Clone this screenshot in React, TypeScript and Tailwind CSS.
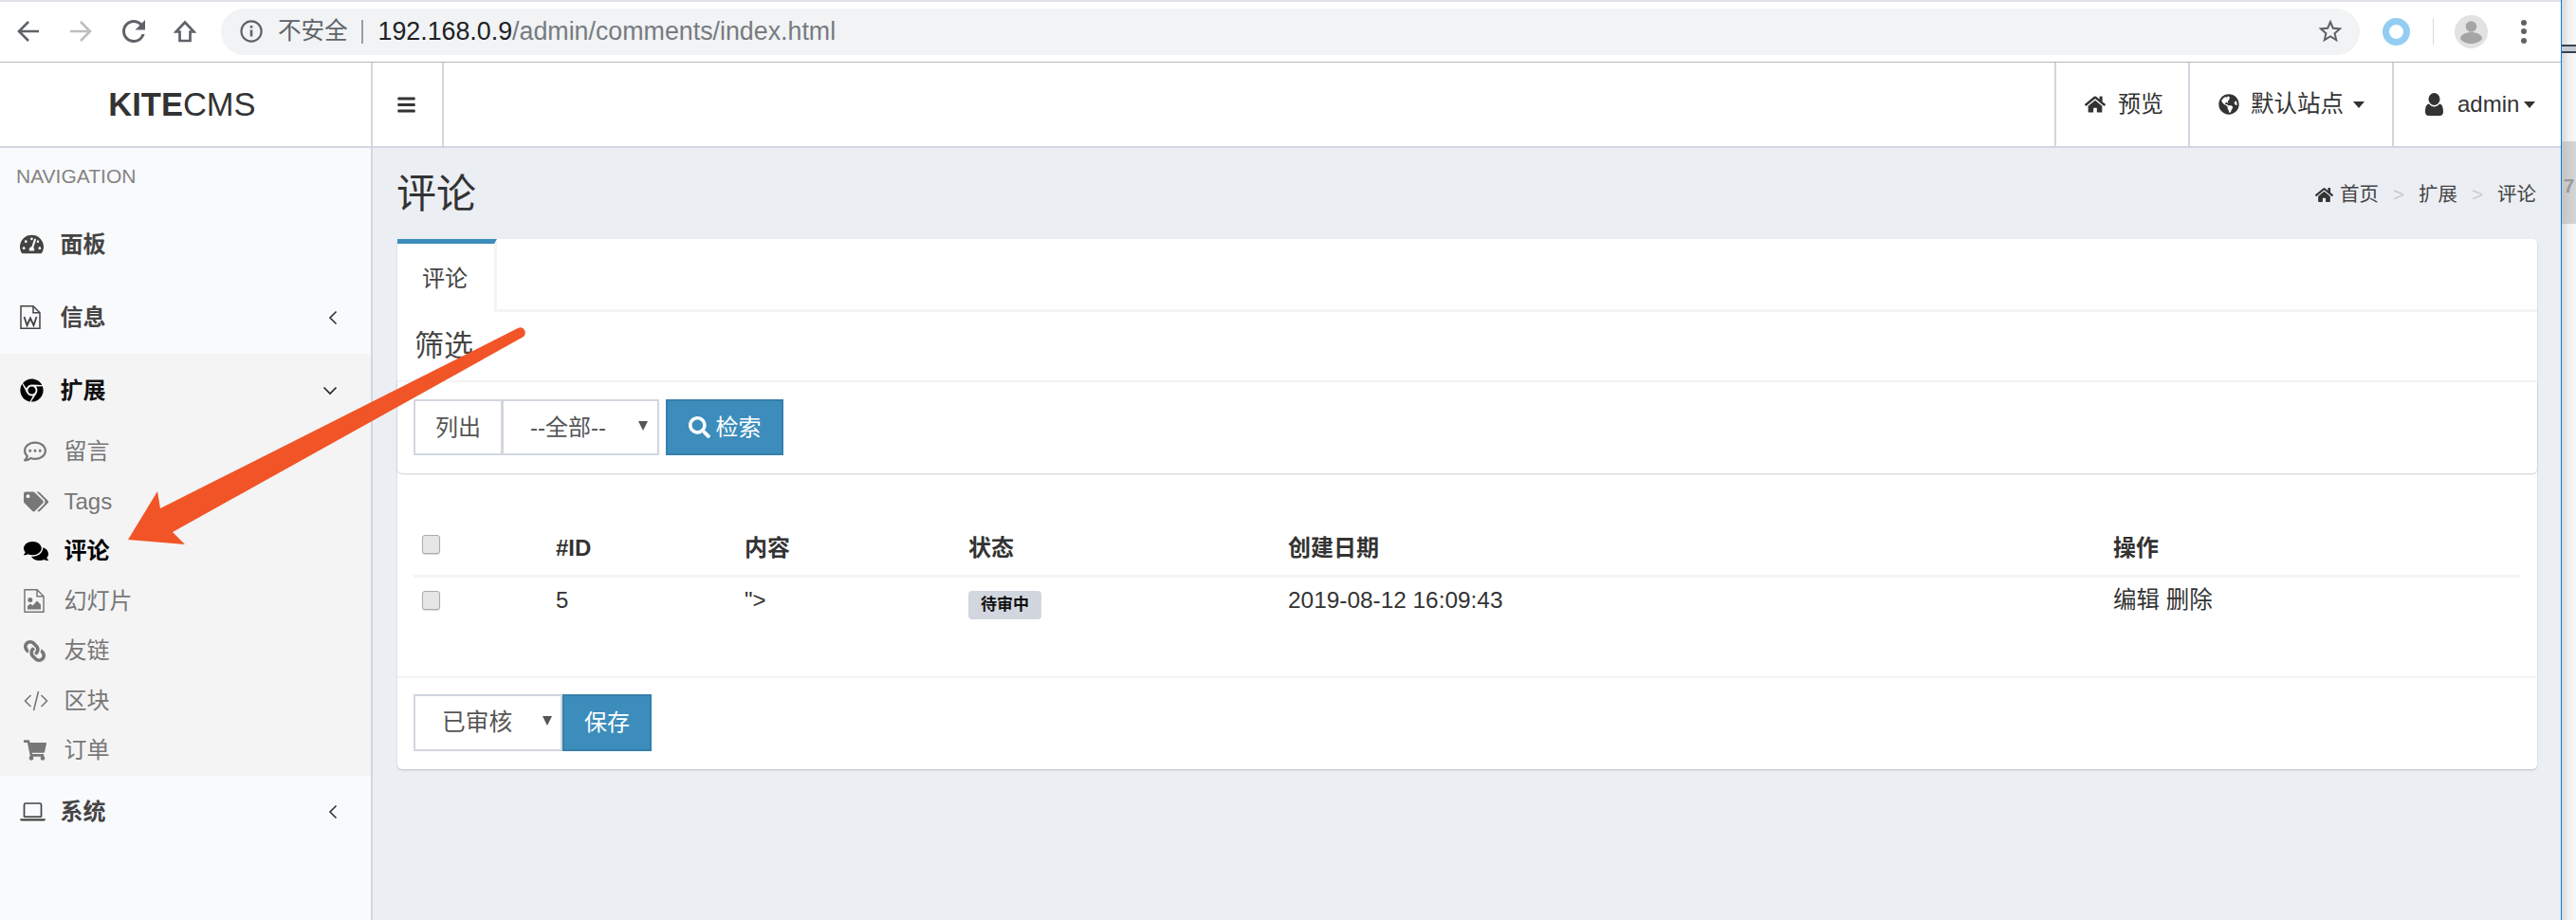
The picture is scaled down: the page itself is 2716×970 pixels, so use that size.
import React from "react";
import {
  FaTachometerAlt, FaChrome, FaRegCommentDots, FaTags, FaComments,
  FaLink, FaShoppingCart, FaHome, FaGlobeAmericas, FaBars, FaSearch,
} from "react-icons/fa";

const Caret = () => (
  <span className="inline-block w-0 h-0 border-l-[6.5px] border-r-[6.5px] border-t-[7px] border-l-transparent border-r-transparent border-t-[#333]" />
);

const ChevLeft = () => (
  <svg width="10" height="16" viewBox="0 0 10 16" fill="none" stroke="#333" strokeWidth="1.6"><path d="M8.5 1.5 2 8l6.5 6.5" /></svg>
);
const ChevDown = () => (
  <svg width="16" height="10" viewBox="0 0 16 10" fill="none" stroke="#222" strokeWidth="1.6"><path d="M1.5 1.5 8 8l6.5-6.5" /></svg>
);

const SelTri = () => (
  <span className="inline-block w-0 h-0 border-l-[5px] border-r-[5px] border-t-[10px] border-l-transparent border-r-transparent border-t-[#555]" />
);

const FileWord = () => (
  <svg width="22" height="25" viewBox="0 0 22 25" fill="none" stroke="#444" strokeWidth="1.5">
    <path d="M1 .8H14L21 7.800V24.200H1Z" />
    <path d="M14 .8V7.800H21" />
    <path d="M4.500 12 7.500 21 11 13.500 14.500 21 17.500 12" strokeWidth="1.8" />
  </svg>
);
const FileImage = () => (
  <svg width="22" height="25" viewBox="0 0 22 25" fill="none" stroke="#777" strokeWidth="1.5">
    <path d="M1 .8H14L21 7.800V24.200H1Z" />
    <path d="M14 .8V7.800H21" />
    <circle cx="6.800" cy="11.500" r="2.500" fill="#777" stroke="none" />
    <path d="M4 21.500V18L7 15.500 9.500 17.500 14 12.500 18 16.500V21.500Z" fill="#777" stroke="none" />
  </svg>
);
const CodeIcon = () => (
  <svg width="26" height="22" viewBox="0 0 26 22" fill="none" stroke="#777" strokeWidth="1.6">
    <path d="M7.500 5 1.500 11l6 6M18.500 5l6 6-6 6M15.500 1 10.500 21" />
  </svg>
);
const Laptop = () => (
  <svg width="27" height="20" viewBox="0 0 27 20" fill="none" stroke="#444" strokeWidth="1.7">
    <path d="M4.500 15.500V2.500Q4.500 1 6 1H21Q22.500 1 22.500 2.500V15.500" />
    <path d="M4.500 15.200H22.500" />
    <path d="M.2 17.200H26.800V18Q26.800 19.500 25 19.500H2Q.2 19.500.2 18Z" fill="#444" stroke="none" />
  </svg>
);
const UserIcon = () => (
  <svg width="19" height="24" viewBox="0 0 19 24" fill="#333">
    <ellipse cx="9.500" cy="6.500" rx="6" ry="6.500" />
    <path d="M4 11.500C5.500 13.500 7.500 14.500 9.500 14.500S13.500 13.500 15 11.500C17.800 12 19 15 19 20C19 22.500 17.500 24 15.500 24H3.500C1.500 24 0 22.500 0 20C0 15 1.200 12 4 11.500Z" />
  </svg>
);

function TopBar() {
  return (
    <div className="h-[66px] shrink-0 bg-white border-t-[2px] border-t-[#dee1e6] border-b border-b-[#b7b9bc] flex items-center pl-[18px] pb-[1px]">
      <svg width="24" height="24" viewBox="0 0 24 24" fill="none" stroke="#5f6368" strokeWidth="2.6"><path d="M23 12H2M12 2 2 12l10 10" /></svg>
      <svg className="ml-[31px]" width="24" height="24" viewBox="0 0 24 24" fill="none" stroke="#bcbec0" strokeWidth="2.6"><path d="M1 12h21M12 2l10 10-10 10" /></svg>
      <svg className="ml-[26px]" width="36" height="36" viewBox="0 0 24 24" fill="#5f6368"><path d="M17.65 6.35A7.958 7.958 0 0 0 12 4c-4.42 0-7.99 3.58-7.99 8s3.57 8 7.99 8c3.730 0 6.840-2.550 7.730-6h-2.080A5.990 5.990 0 0 1 12 18c-3.310 0-6-2.690-6-6s2.690-6 6-6c1.660 0 3.140.690 4.220 1.780L13 11h7V4l-2.350 2.350z" /></svg>
      <svg className="ml-[24px]" width="24" height="24" viewBox="0 0 24 24" fill="none" stroke="#5f6368" strokeWidth="2.7" strokeLinejoin="miter"><path d="M12 2.500 2.500 12.500H6.500V22H17.500V12.500H21.500Z" /></svg>
      <div className="ml-[26px] w-[2255px] h-[49px] rounded-full bg-[#f1f3f4] flex items-center pl-[20px] pr-[16px]">
        <svg width="24" height="24" viewBox="0 0 24 24" fill="none" stroke="#5f6368" strokeWidth="2.2">
          <circle cx="12" cy="12" r="10.6" />
          <path d="M12 10.500v7" strokeWidth="2.6" />
          <path d="M12 6v2.600" strokeWidth="2.6" />
        </svg>
        <span className="ml-[16px] text-[24.500px] leading-none text-[#5f6368]">不安全</span>
        <span className="ml-[14px] w-[2px] h-[25px] bg-[#9a9da0]" />
        <span className="ml-[16px] text-[26.800px] leading-none text-[#202124]">192.168.0.9<span className="text-[#777b80]">/admin/comments/index.html</span></span>
        <svg className="ml-auto" width="30" height="30" viewBox="0 0 24 24" fill="#5f6368"><path d="M22 9.240l-7.190-.620L12 2 9.190 8.630 2 9.240l5.460 4.730L5.820 21 12 17.270 18.180 21l-1.630-7.030L22 9.240zM12 15.400l-3.760 2.270 1-4.280-3.320-2.880 4.380-.380L12 6.100l1.710 4.040 4.380.380-3.320 2.880 1 4.280L12 15.400z" /></svg>
      </div>
      <span className="ml-[24px] w-[29px] h-[29px] rounded-full border-[7px] border-[#93cdf3] bg-white" />
      <span className="ml-[24px] w-[1px] h-[28px] bg-[#d5d7d9]" />
      <svg className="ml-[22px]" width="35" height="35" viewBox="0 0 35 35">
        <circle cx="17.5" cy="17.5" r="17.5" fill="#e2e2e2" />
        <circle cx="17.5" cy="12" r="5.800" fill="#a5a5a5" />
        <path d="M6 25c0-4.500 6-7 11.500-7S29 20.500 29 25c-2.500 3.500-7 5-11.500 5S8.500 28.500 6 25z" fill="#a5a5a5" />
      </svg>
      <div className="ml-[35px] flex flex-col gap-[3.500px]">
        <span className="w-[6px] h-[6px] rounded-full bg-[#5f6368]" />
        <span className="w-[6px] h-[6px] rounded-full bg-[#5f6368]" />
        <span className="w-[6px] h-[6px] rounded-full bg-[#5f6368]" />
      </div>
    </div>
  );
}

function Header() {
  return (
    <div className="h-[90px] shrink-0 flex bg-white border-b-[2px] border-b-[#d2d6de] text-[#333]">
      <div className="w-[393px] shrink-0 border-r-[2px] border-r-[#d2d6de] flex items-center justify-center text-[34.500px] leading-none pr-[7px]">
        <b className="font-bold">KITE</b><span>CMS</span>
      </div>
      <div className="w-[75px] shrink-0 border-r-[2px] border-r-[#d2d6de] flex items-center justify-center pr-[2px]">
        <FaBars size={21} color="#333" />
      </div>
      <div className="flex-1" />
      <div className="w-[141px] border-l-[2px] border-l-[#d2d6de] flex items-center pl-[30px] text-[24px]">
        <FaHome size={22} />
        <span className="ml-[13px]">预览</span>
      </div>
      <div className="w-[215px] border-l-[2px] border-l-[#d2d6de] flex items-center pl-[30px] text-[24.500px]">
        <FaGlobeAmericas size={22} />
        <span className="ml-[12px]">默认站点</span>
        <span className="ml-[10px] flex"><Caret /></span>
      </div>
      <div className="w-[178px] border-l-[2px] border-l-[#d2d6de] flex items-center pl-[33px] text-[24px]">
        <UserIcon />
        <span className="ml-[15px]">admin</span>
        <span className="ml-[5px] flex"><Caret /></span>
      </div>
    </div>
  );
}

function MainItem({ icon, label, chev, dark }: { icon: React.ReactNode; label: string; chev?: React.ReactNode; dark?: boolean }) {
  return (
    <div className={`h-[77px] flex items-center pl-[21px] pr-[35px] text-[24px] font-bold ${dark ? "text-[#111]" : "text-[#444]"}`}>
      <span className="w-[42.500px] flex shrink-0">{icon}</span>
      <span>{label}</span>
      <span className="ml-auto flex">{chev}</span>
    </div>
  );
}

function SubItem({ icon, label, active }: { icon: React.ReactNode; label: string; active?: boolean }) {
  return (
    <div className={`h-[52.500px] flex items-center pl-[25px] text-[24px] ${active ? "text-black font-bold" : "text-[#777]"}`}>
      <span className="w-[42.500px] flex shrink-0">{icon}</span>
      <span>{label}</span>
    </div>
  );
}

function Sidebar() {
  return (
    <div className="w-[393px] shrink-0 bg-[#f9fafc] border-r-[2px] border-r-[#d2d6de]">
      <div className="h-[58px] mb-[5px] pt-[2px] flex items-center pl-[17px] text-[21px] text-[#848484]">NAVIGATION</div>
      <MainItem icon={<FaTachometerAlt size={25} />} label="面板" />
      <MainItem icon={<FileWord />} label="信息" chev={<ChevLeft />} />
      <div className="bg-[#f4f4f5]">
        <MainItem icon={<FaChrome size={25} color="#000" />} label="扩展" dark chev={<ChevDown />} />
        <SubItem icon={<FaRegCommentDots size={24} />} label="留言" />
        <SubItem icon={<FaTags size={26} />} label="Tags" />
        <SubItem icon={<FaComments size={26} />} label="评论" active />
        <SubItem icon={<FileImage />} label="幻灯片" />
        <SubItem icon={<span className="flex -scale-x-100"><FaLink size={23} /></span>} label="友链" />
        <SubItem icon={<CodeIcon />} label="区块" />
        <SubItem icon={<FaShoppingCart size={24} />} label="订单" />
      </div>
      <MainItem icon={<Laptop />} label="系统" chev={<ChevLeft />} />
    </div>
  );
}

const Check = () => (
  <span className="block w-[19px] h-[20px] rounded-[3px] bg-[#e6e6e6] border border-[#ababab] shadow-[0_1px_1px_rgba(0,0,0,0.15)]" />
);

function Card() {
  return (
    <div className="bg-white rounded-[5px] shadow-[0_1px_2px_rgba(0,0,0,0.2)] text-[24px] text-[#333]">
      <div className="h-[77px] flex border-b-[3px] border-b-[#f4f4f4]">
        <div className="w-[105px] h-[77px] bg-white border-t-[5px] border-t-[#3c8dbc] border-r-[3px] border-r-[#f4f4f4] flex items-center justify-center text-[#444] pr-[2px] pt-[2px]">评论</div>
      </div>
      <div className="h-[74px] border-b-[2px] border-b-[#f4f4f4] flex items-center pl-[18px] text-[31px] text-[#444]">筛选</div>
      <div className="h-[96px] pl-[17px] pt-[18px] flex rounded-b-[5px] shadow-[0_1px_2px_rgba(0,0,0,0.2)]">
        <div className="w-[94px] h-[59px] border-[2px] border-[#d2d6de] flex items-center justify-center text-[#555]">列出</div>
        <div className="w-[166px] h-[59px] -ml-[1px] border-[2px] border-[#d2d6de] flex items-center pl-[28px] pr-[10px] text-[#555]">
          <span>--全部--</span>
          <span className="ml-auto mb-[4px] flex"><SelTri /></span>
        </div>
        <div className="w-[124px] h-[59px] ml-[7px] bg-[#3c8dbc] border-[2px] border-[#367fa9] flex items-center justify-center text-white">
          <FaSearch size={23} />
          <span className="ml-[6px]">检索</span>
        </div>
      </div>
      <div className="h-[216px] pt-[51px] px-[17px] border-b-[2px] border-b-[#f4f4f4]">
        <table className="w-[2221px] table-fixed border-collapse">
          <colgroup>
            <col className="w-[141px]" />
            <col className="w-[199px]" />
            <col className="w-[236px]" />
            <col className="w-[337px]" />
            <col className="w-[870px]" />
            <col className="w-[438px]" />
          </colgroup>
          <thead>
            <tr className="h-[57px] border-b-[3px] border-b-[#f4f4f4] font-bold text-left">
              <th className="pl-[9px] align-top pt-[14px]"><Check /></th>
              <th className="pl-[9px] font-bold">#ID</th>
              <th className="pl-[9px] font-bold">内容</th>
              <th className="pl-[9px] font-bold">状态</th>
              <th className="pl-[9px] font-bold">创建日期</th>
              <th className="pl-[9px] font-bold">操作</th>
            </tr>
          </thead>
          <tbody>
            <tr className="h-[52px] align-top">
              <td className="pl-[9px] pt-[14px]"><Check /></td>
              <td className="pl-[9px] pt-[10px] leading-[28px]">5</td>
              <td className="pl-[9px] pt-[10px] leading-[28px]">&quot;&gt;</td>
              <td className="pl-[9px] pt-[14px]">
                <span className="block w-[77px] h-[30px] rounded-[4px] bg-[#d2d6de] text-[#111] text-[17px] font-bold text-center leading-[30px]">待审中</span>
              </td>
              <td className="pl-[9px] pt-[10px] leading-[28px] text-[24.400px]">2019-08-12 16:09:43</td>
              <td className="pl-[9px] pt-[10px] leading-[28px] text-[24.500px]">编辑 删除</td>
            </tr>
          </tbody>
        </table>
      </div>
      <div className="h-[96px] pl-[17px] pt-[17px] flex">
        <div className="w-[157px] h-[60px] border-[2px] border-[#d2d6de] flex items-center pl-[28px] pr-[9px] text-[#555]">
          <span className="text-[24.700px]">已审核</span>
          <span className="ml-auto mb-[4px] flex"><SelTri /></span>
        </div>
        <div className="w-[94px] h-[60px] bg-[#3c8dbc] border-[2px] border-[#367fa9] flex items-center justify-center text-white">保存</div>
      </div>
    </div>
  );
}

function Content() {
  return (
    <div className="flex-1 bg-[#ebeef3] pl-[26px] pr-[25px] min-w-0">
      <div className="h-[96px] flex items-center justify-between pr-[1px]">
        <span className="text-[42px] text-[#333] -ml-[1px]">评论</span>
        <div className="flex items-center text-[20.500px] text-[#444] mt-[2px]">
          <FaHome size={19} color="#333" />
          <span className="ml-[7px]">首页</span>
          <span className="ml-[15px] text-[#ccc]">&gt;</span>
          <span className="ml-[15px]">扩展</span>
          <span className="ml-[15px] text-[#ccc]">&gt;</span>
          <span className="ml-[15px]">评论</span>
        </div>
      </div>
      <Card />
    </div>
  );
}

function RightStrip() {
  return (
    <div className="w-[16px] shrink-0 h-full border-l border-l-[#0f7bd6] flex flex-col bg-gradient-to-r from-[#d9d9d9] via-[#f0f0f0] to-[#f8f8f8] overflow-hidden">
      <div className="h-[47px] shrink-0" />
      <div className="h-[9px] shrink-0 bg-[#c7ccd2] border-y-2 border-y-[#3a4250]" />
      <div className="h-[93px] shrink-0" />
      <div className="h-[87px] shrink-0 bg-gradient-to-r from-[#c4c4c4] to-[#d6d6d6] flex items-center pl-[2px] pt-[6px] text-[20px] font-bold text-[#999] leading-none">7</div>
    </div>
  );
}

export default function App() {
  return (
    <div className="relative w-[2716px] h-[970px] overflow-hidden flex font-['Liberation_Sans','Noto_Sans_CJK_SC',sans-serif]">
      <div className="w-[2700px] shrink-0 h-full flex flex-col">
        <TopBar />
        <Header />
        <div className="flex-1 flex min-h-0">
          <Sidebar />
          <Content />
        </div>
      </div>
      <RightStrip />
      <svg className="absolute left-0 top-0 pointer-events-none" width="2716" height="970" viewBox="0 0 2716 970">
        <path d="M135 569 166 518 169 536 546 346Q551 344 553 348Q555 352 552 355L182 561 195 574Z" fill="#f15527" />
      </svg>
    </div>
  );
}
